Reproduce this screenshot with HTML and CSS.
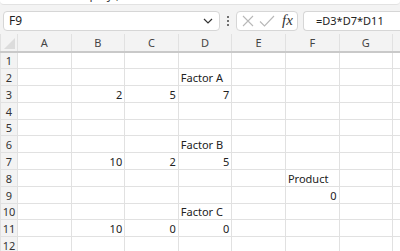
FILE: index.html
```html
<!DOCTYPE html>
<html lang="en">
<head>
  <meta charset="UTF-8" />
  <meta name="viewport" content="width=device-width, initial-scale=1.0" />
  <title>Book1 - Excel</title>
  <link rel="stylesheet" href="styles.css">
</head>
<body>

  <div class="ribbon-edge">
    <span class="ribbon-text">Display ,</span>
  </div>

  <div class="formula-bar">
    <div class="name-box">
      <span>F9</span>
      <svg class="chevron" width="10" height="6" viewBox="0 0 10 6"><path d="M1 1l4 4 4-4" fill="none" stroke="#333" stroke-width="1.2"/></svg>
    </div>
    <div class="grip"><i></i><i></i><i></i></div>
    <div class="fx-box">
      <svg width="14" height="14" viewBox="0 0 14 14"><path d="M2 2l10 10M12 2L2 12" fill="none" stroke="#b8b8b8" stroke-width="1.1"/></svg>
      <svg width="16" height="14" viewBox="0 0 16 14"><path d="M1 7.5l4.5 4.5L15 2" fill="none" stroke="#b8b8b8" stroke-width="1.1"/></svg>
      <span class="fx">fx</span>
    </div>
    <div class="formula-box">=D3*D7*D11</div>
  </div>

  <table class="sheet">
    <colgroup>
      <col class="col-head">
      <col><col><col><col><col><col><col><col>
    </colgroup>
    <tr class="letters">
      <th class="corner"><span class="corner-tri"></span></th>
      <th>A</th><th>B</th><th>C</th><th>D</th><th>E</th><th>F</th><th>G</th><th></th>
    </tr>
    <tr><th>1</th><td></td><td></td><td></td><td></td><td></td><td></td><td></td><td></td></tr>
    <tr><th>2</th><td></td><td></td><td></td><td class="label">Factor A</td><td></td><td></td><td></td><td></td></tr>
    <tr><th>3</th><td></td><td class="num">2</td><td class="num">5</td><td class="num">7</td><td></td><td></td><td></td><td></td></tr>
    <tr><th>4</th><td></td><td></td><td></td><td></td><td></td><td></td><td></td><td></td></tr>
    <tr><th>5</th><td></td><td></td><td></td><td></td><td></td><td></td><td></td><td></td></tr>
    <tr><th>6</th><td></td><td></td><td></td><td class="label">Factor B</td><td></td><td></td><td></td><td></td></tr>
    <tr><th>7</th><td></td><td class="num">10</td><td class="num">2</td><td class="num">5</td><td></td><td></td><td></td><td></td></tr>
    <tr><th>8</th><td></td><td></td><td></td><td></td><td></td><td class="label">Product</td><td></td><td></td></tr>
    <tr><th>9</th><td></td><td></td><td></td><td></td><td></td><td class="num">0</td><td></td><td></td></tr>
    <tr><th>10</th><td></td><td></td><td></td><td class="label">Factor C</td><td></td><td></td><td></td><td></td></tr>
    <tr><th>11</th><td></td><td class="num">10</td><td class="num">0</td><td class="num">0</td><td></td><td></td><td></td><td></td></tr>
    <tr><th>12</th><td></td><td></td><td></td><td></td><td></td><td></td><td></td><td></td></tr>
  </table>

</body>
</html>
```

FILE: styles.css
```css
* {
  box-sizing: border-box;
}

body {
  margin: 0;
  width: 400px;
  height: 251px;
  overflow: hidden;
  background: #f3f3f3;
  font-family: 'Noto Sans', 'Open Sans', sans-serif;
  color: #222;
}

.ribbon-edge {
  height: 5px;
  background: #fff;
  border-bottom: 1px solid #e2e2e2;
  border-radius: 0 0 4px 4px;
  overflow: hidden;
  position: relative;
}

.ribbon-text {
  position: absolute;
  left: 72px;
  top: -14px;
  font-size: 12px;
  color: #444;
}

.formula-bar {
  display: flex;
  align-items: center;
  height: 29px;
  padding: 2px 0 0 3px;
}

.name-box,
.fx-box,
.formula-box {
  height: 20px;
  background: #fff;
  border: 1px solid #d6d6d6;
  border-radius: 4px;
  display: flex;
  align-items: center;
  font-size: 12px;
}

.name-box {
  width: 217px;
  padding: 0 6px 0 5px;
  justify-content: space-between;
}

.grip {
  width: 16px;
  display: flex;
  flex-direction: column;
  align-items: center;
  gap: 2px;
}

.grip i {
  width: 2px;
  height: 2px;
  background: #444;
  border-radius: 1px;
}

.fx-box {
  width: 62px;
  padding: 0 4px;
  gap: 4px;
}

.fx {
  font-family: 'Liberation Serif', serif;
  font-style: italic;
  font-size: 15px;
  margin-left: 3px;
  color: #333;
}

.formula-box {
  flex: 1;
  margin-left: 5px;
  padding-left: 12px;
  font-size: 11px;
  border-right: none;
  border-radius: 4px 0 0 4px;
}

.sheet {
  border-collapse: collapse;
  table-layout: fixed;
  width: 446px;
  background: #fff;
  font-size: 11px;
}

.sheet col {
  width: 53.6px;
}

.sheet col.col-head {
  width: 17px;
}

.sheet tr {
  height: 16.8px;
}

.sheet td,
.sheet th {
  border: 1px solid #e1e1e1;
  padding: 0 2px;
  line-height: 14px;
  vertical-align: bottom;
  white-space: nowrap;
  overflow: visible;
}

.sheet th {
  background: #f3f3f3;
  font-weight: normal;
  color: #333;
  text-align: center;
  padding: 0;
  border-color: #e1e1e1;
}

.sheet tr.letters {
  height: 18px;
}

.letters th {
  border-top: none;
  border-bottom: 2px solid #c9c9c9;
  vertical-align: middle;
  color: #444;
}

.corner {
  position: relative;
}

.corner-tri {
  position: absolute;
  right: 2px;
  bottom: 2px;
  width: 0;
  height: 0;
  border-left: 11px solid transparent;
  border-bottom: 11px solid #dcdcdc;
}

.num {
  text-align: right;
}

.label {
  text-align: left;
  overflow: visible;
}
```
